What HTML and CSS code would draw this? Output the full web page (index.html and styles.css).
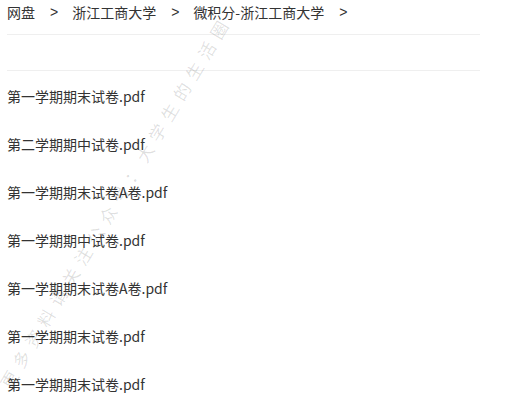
FILE: index.html
```html
<!DOCTYPE html>
<html lang="zh-CN">
<head>
  <meta charset="UTF-8">
  <meta name="viewport" content="width=device-width, initial-scale=1.0">
  <title>网盘</title>
  <link rel="stylesheet" href="styles.css">
</head>
<body>
  <div class="disk">
    <div class="crumbs">
      <span>网盘</span><span class="sep">&gt;</span>
      <span>浙江工商大学</span><span class="sep">&gt;</span>
      <span>微积分-浙江工商大学</span><span class="sep">&gt;</span>
    </div>
    <div class="toolbar"></div>
    <ul class="files">
      <li>第一学期期末试卷.pdf</li>
      <li>第二学期期中试卷.pdf</li>
      <li>第一学期期末试卷A卷.pdf</li>
      <li>第一学期期中试卷.pdf</li>
      <li>第一学期期末试卷A卷.pdf</li>
      <li>第一学期期末试卷.pdf</li>
      <li>第一学期期末试卷.pdf</li>
    </ul>
  </div>
  <div class="watermark">更多资料请关注公众号：大学生的生活圈</div>
</body>
</html>
```

FILE: styles.css
```css
body{
  margin: 0;
  background: #fff;
  font-family: "Noto Sans CJK SC", "Noto Sans", sans-serif;
  font-size: 14px;
  color: #333;
  overflow: hidden;
}
.disk{
  width: 473px;
  margin-left: 7px;
}
.crumbs{
  display: flex;
  align-items: center;
  height: 24px;
  line-height: 24px;
  padding-bottom: 10px;
  border-bottom: 1px solid #efefef;
}
.sep{
  padding: 0 14px 0 15px;
  font-family: "Liberation Sans", sans-serif;
}
.toolbar{
  height: 35px;
  border-bottom: 1px solid #efefef;
}
.files{
  list-style: none;
  margin: 0;
  padding: 1px 0 0;
}
.files li{
  height: 48px;
  line-height: 48px;
}
.watermark{
  position: absolute;
  left: 4px;
  top: 374px;
  transform-origin: 0 50%;
  transform: rotate(-59deg);
  font-size: 17px;
  letter-spacing: 7px;
  white-space: nowrap;
  color: rgba(0, 0, 0, 0.13);
  pointer-events: none;
}
```
